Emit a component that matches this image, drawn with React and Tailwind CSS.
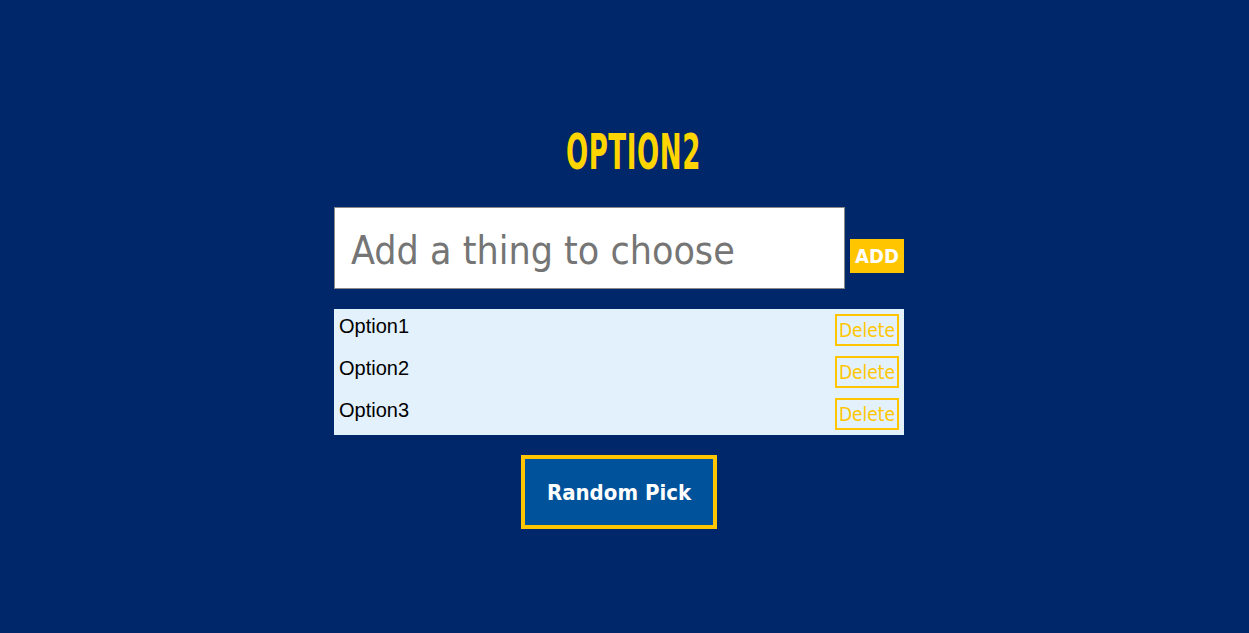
import { useState } from "react";

const tahoma = { fontFamily: '"DejaVu Sans Condensed", "DejaVu Sans", sans-serif' };

export default function App() {
  const [items, setItems] = useState(["Option1", "Option2", "Option3"]);
  const [text, setText] = useState("");
  const [picked] = useState("Option2");

  const add = () => {
    if (!text.trim()) return;
    setItems((v) => [...v, text.trim()]);
    setText("");
  };

  return (
    <div className="min-h-[633px] bg-[#00276a] flex flex-col items-center pt-[124px]">
      <div className="w-[570px] mr-[11px] flex flex-col">
        <h1 className="text-center pl-[28px] h-[56px] leading-[56px]">
          <span
            className="inline-block scale-x-[0.58] text-[#ffd500] font-bold text-[50px] tracking-[1px]"
            style={{ fontFamily: '"DejaVu Sans Condensed", sans-serif' }}
          >
            {picked.toUpperCase()}
          </span>
        </h1>

        <div className="flex items-center gap-[5px] mt-[27px]">
          <input
            value={text}
            onChange={(e) => setText(e.target.value)}
            placeholder="Add a thing to choose"
            className="w-[511px] h-[82px] bg-white border border-[#8a8a8a] px-[16px] pt-[4px] text-[39px] text-gray-700 placeholder:text-[#757575] outline-none"
            style={tahoma}
          />
          <button
            onClick={add}
            className="w-[54px] h-[34px] mt-[16px] bg-[#ffc600] text-white font-bold text-[20px]"
            style={tahoma}
          >
            ADD
          </button>
        </div>

        <ul className="mt-[20px] bg-[#e3f1fc]">
          {items.map((it, i) => (
            <li key={i} className="flex items-start justify-between h-[42px] px-[5px] pt-[3px]">
              <span className="mt-[2px] text-[20px] leading-[24px] text-black" style={{ fontFamily: '"Liberation Sans", Arial, sans-serif' }}>
                {it}
              </span>
              <button
                onClick={() => setItems((v) => v.filter((_, j) => j !== i))}
                className="mt-[2px] w-[64px] h-[32px] border-2 border-[#ffc600] text-[#ffc600] text-[19px] leading-none pt-[1px]"
                style={tahoma}
              >
                Delete
              </button>
            </li>
          ))}
        </ul>

        <div className="flex justify-center mt-[20px]">
          <button
            className="w-[196px] h-[74px] border-4 border-[#ffc600] bg-[#00529b] text-white font-bold text-[22px]"
            style={tahoma}
          >
            Random Pick
          </button>
        </div>
      </div>
    </div>
  );
}
